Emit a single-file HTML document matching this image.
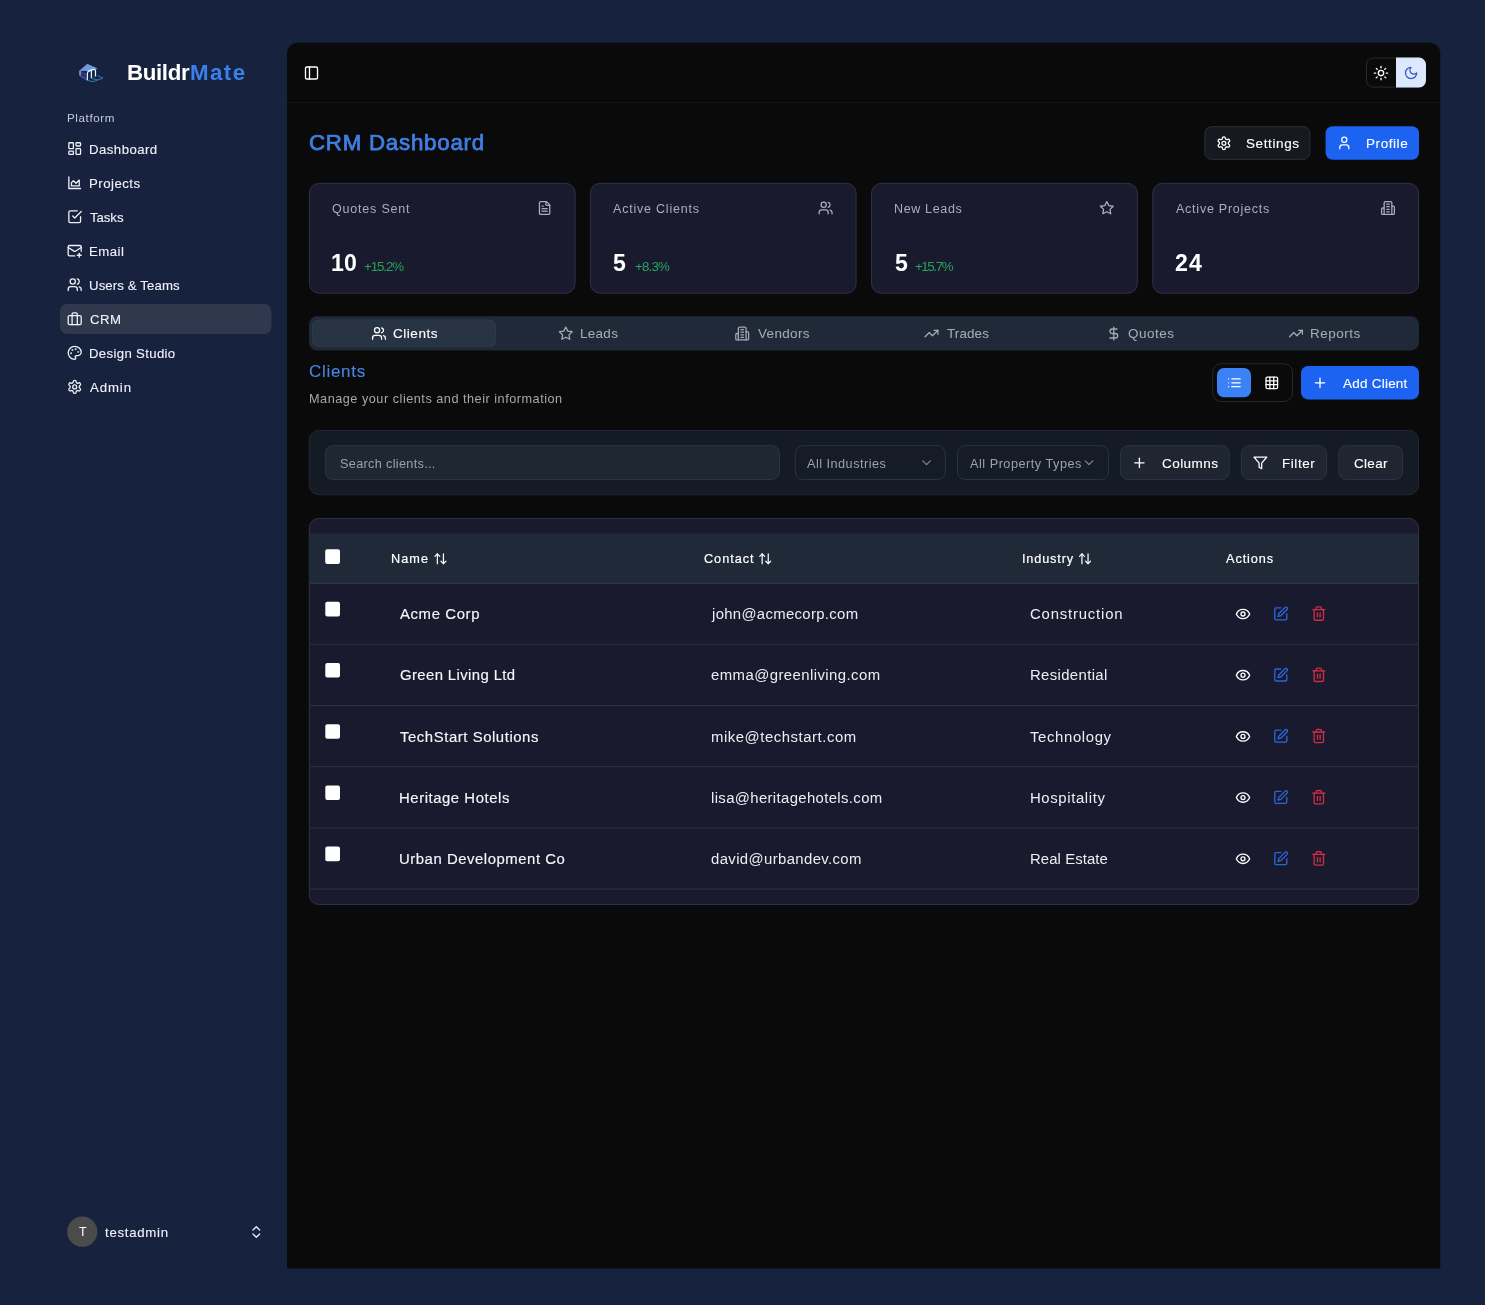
<!DOCTYPE html>
<html>
<head>
<meta charset="utf-8">
<title>CRM Dashboard</title>
<style>
*{box-sizing:border-box;margin:0;padding:0}
html,body{width:1485px;height:1305px;overflow:hidden}
body{background:#17223f;font-family:"Liberation Sans",sans-serif;color:#fff;position:relative}
.a{position:absolute}
.t{white-space:nowrap;line-height:1;will-change:transform}
.i{fill:none;stroke:currentColor;stroke-linecap:round;stroke-linejoin:round}
</style>
</head>
<body>
<svg class="a" id="bgsvg" style="left:0;top:0" width="1485" height="1305" viewBox="0 0 1485 1305">
<g>
<polygon points="80,70.300 87.400,64 97.500,68.300 90.500,72.800 87.400,71.200" fill="#6a9ddb"/>
<polygon points="80,70.300 87.400,64 89.500,65 82,71.500" fill="#7f8fe0"/>
<polygon points="80,70.500 80,75.600 87.400,80.200 87.400,73.500" fill="#243873"/>
<polygon points="87.400,73 97.500,68.500 97.500,76.500 87.400,80.200" fill="#102c4e"/>
<path d="M80 70.500V75.600" stroke="#c9d4f4" stroke-width="1.100" fill="none"/>
<path d="M80 75.800L87.400 80.300" stroke="#5552b8" stroke-width="1.200" fill="none"/>
<path d="M87.400 80.200V73.200Q87.600 71.300 89.500 70.500L91.400 69.800V78.300M91.400 69.800Q93 69 94.300 69.600L95.500 70.100V76.400" stroke="#eef4ff" stroke-width="1.150" fill="none"/>
<path d="M87.400 80.300L93 81.700L103 78L97.500 75.600M91.400 78.400L97.500 79.800" stroke="#3a82b4" stroke-width="0.900" fill="none"/>
</g>
<rect x="60" y="304" width="211.4" height="30" rx="7" fill="#30384d"/>
<svg class="i" x="66.9" y="140.8" width="15.6" height="15.6" viewBox="0 0 24 24" color="#eef1f7" stroke-width="2"><rect width="7" height="9" x="3" y="3" rx="1"/><rect width="7" height="5" x="14" y="3" rx="1"/><rect width="7" height="9" x="14" y="12" rx="1"/><rect width="7" height="5" x="3" y="16" rx="1"/></svg>
<svg class="i" x="66.9" y="174.84" width="15.6" height="15.6" viewBox="0 0 24 24" color="#eef1f7" stroke-width="2"><path d="M3 3v18h18"/><path d="M7 12v5h12V8l-5 5-4-4Z"/></svg>
<svg class="i" x="66.9" y="208.88" width="15.6" height="15.6" viewBox="0 0 24 24" color="#eef1f7" stroke-width="2"><path d="m9 11 3 3L22 4"/><path d="M21 12v7a2 2 0 0 1-2 2H5a2 2 0 0 1-2-2V5a2 2 0 0 1 2-2h11"/></svg>
<svg class="i" x="66.9" y="242.92" width="15.6" height="15.6" viewBox="0 0 24 24" color="#eef1f7" stroke-width="2"><path d="M22 13V6a2 2 0 0 0-2-2H4a2 2 0 0 0-2 2v12c0 1.1.9 2 2 2h8"/><path d="m22 7-8.970 5.700a1.940 1.940 0 0 1-2.060 0L2 7"/><path d="M19 16v6"/><path d="M16 19h6"/></svg>
<svg class="i" x="66.9" y="276.96" width="15.6" height="15.6" viewBox="0 0 24 24" color="#eef1f7" stroke-width="2"><path d="M16 21v-2a4 4 0 0 0-4-4H6a4 4 0 0 0-4 4v2"/><circle cx="9" cy="7" r="4"/><path d="M22 21v-2a4 4 0 0 0-3-3.870"/><path d="M16 3.130a4 4 0 0 1 0 7.750"/></svg>
<svg class="i" x="66.9" y="311" width="15.6" height="15.6" viewBox="0 0 24 24" color="#eef1f7" stroke-width="2"><rect width="20" height="14" x="2" y="7" rx="2" ry="2"/><path d="M16 21V5a2 2 0 0 0-2-2h-4a2 2 0 0 0-2 2v16"/></svg>
<svg class="i" x="66.9" y="345.04" width="15.6" height="15.6" viewBox="0 0 24 24" color="#eef1f7" stroke-width="2"><circle cx="13.500" cy="6.500" r=".5" fill="currentColor"/><circle cx="17.500" cy="10.500" r=".5" fill="currentColor"/><circle cx="8.500" cy="7.500" r=".5" fill="currentColor"/><circle cx="6.500" cy="12.500" r=".5" fill="currentColor"/><path d="M12 2C6.500 2 2 6.500 2 12s4.500 10 10 10c.926 0 1.648-.746 1.648-1.688 0-.437-.18-.835-.437-1.125-.29-.289-.438-.652-.438-1.125a1.640 1.640 0 0 1 1.668-1.668h1.996c3.051 0 5.555-2.503 5.555-5.554C21.965 6.012 17.461 2 12 2z"/></svg>
<svg class="i" x="66.9" y="379.08" width="15.6" height="15.6" viewBox="0 0 24 24" color="#eef1f7" stroke-width="2"><path d="M12.220 2h-.44a2 2 0 0 0-2 2v.18a2 2 0 0 1-1 1.730l-.43.250a2 2 0 0 1-2 0l-.15-.08a2 2 0 0 0-2.730.730l-.22.380a2 2 0 0 0 .73 2.730l.15.100a2 2 0 0 1 1 1.720v.510a2 2 0 0 1-1 1.740l-.15.090a2 2 0 0 0-.73 2.730l.22.380a2 2 0 0 0 2.730.730l.15-.08a2 2 0 0 1 2 0l.43.250a2 2 0 0 1 1 1.730V20a2 2 0 0 0 2 2h.44a2 2 0 0 0 2-2v-.18a2 2 0 0 1 1-1.730l.43-.250a2 2 0 0 1 2 0l.15.080a2 2 0 0 0 2.730-.730l.22-.390a2 2 0 0 0-.73-2.730l-.15-.080a2 2 0 0 1-1-1.740v-.500a2 2 0 0 1 1-1.740l.15-.090a2 2 0 0 0 .73-2.730l-.22-.380a2 2 0 0 0-2.730-.730l-.15.080a2 2 0 0 1-2 0l-.43-.250a2 2 0 0 1-1-1.730V4a2 2 0 0 0-2-2z"/><circle cx="12" cy="12" r="3"/></svg>
<circle cx="82.3" cy="1231.7" r="15.1" fill="#4b4b4b"/>
<svg class="i" x="248.3" y="1224" width="16" height="16" viewBox="0 0 24 24" color="#e8ecf4" stroke-width="2"><path d="m7 15 5 5 5-5"/><path d="m7 9 5-5 5 5"/></svg>
<path d="M297.5 42.7H1429.8A10.5 10.5 0 0 1 1440.3 53.2V1268.5H287V53.2A10.5 10.5 0 0 1 297.5 42.7Z" fill="#0a0a0a"/>
<rect x="287" y="102.2" width="1153.3" height="1" fill="#171717"/>
<svg class="i" x="303.5" y="65" width="16" height="16" viewBox="0 0 24 24" color="#fff" stroke-width="2"><rect width="18" height="18" x="3" y="3" rx="2"/><path d="M9 3v18"/></svg>
<rect x="1366.5" y="58.1" width="59" height="29" rx="6.5" fill="#0a0a0a" stroke="#2b2b2b" stroke-width="1"/>
<path d="M1396 57.6H1419A7 7 0 0 1 1426 64.6V80.6A7 7 0 0 1 1419 87.6H1396V57.6Z" fill="#dbe8fd"/>
<svg class="i" x="1373" y="65.1" width="16" height="16" viewBox="0 0 24 24" color="#fff" stroke-width="2"><circle cx="12" cy="12" r="4"/><path d="M12 2v2"/><path d="M12 20v2"/><path d="m4.930 4.930 1.410 1.410"/><path d="m17.660 17.660 1.410 1.410"/><path d="M2 12h2"/><path d="M20 12h2"/><path d="m6.340 17.660-1.410 1.410"/><path d="m19.070 4.930-1.410 1.410"/></svg>
<svg class="i" x="1403.6" y="65.5" width="15" height="15" viewBox="0 0 24 24" color="#3556bd" stroke-width="2"><path d="M12 3a6 6 0 0 0 9 9 9 9 0 1 1-9-9Z"/></svg>
<rect x="1204.9" y="126.7" width="105" height="32.6" rx="6.5" fill="#161a20" stroke="#2b3038" stroke-width="1"/>
<svg class="i" x="1216.2" y="135.5" width="15.4" height="15.4" viewBox="0 0 24 24" color="#fff" stroke-width="2"><path d="M12.220 2h-.44a2 2 0 0 0-2 2v.18a2 2 0 0 1-1 1.730l-.43.250a2 2 0 0 1-2 0l-.15-.08a2 2 0 0 0-2.730.730l-.22.380a2 2 0 0 0 .73 2.730l.15.100a2 2 0 0 1 1 1.720v.510a2 2 0 0 1-1 1.740l-.15.090a2 2 0 0 0-.73 2.730l.22.380a2 2 0 0 0 2.730.730l.15-.08a2 2 0 0 1 2 0l.43.250a2 2 0 0 1 1 1.730V20a2 2 0 0 0 2 2h.44a2 2 0 0 0 2-2v-.18a2 2 0 0 1 1-1.730l.43-.250a2 2 0 0 1 2 0l.15.080a2 2 0 0 0 2.730-.730l.22-.390a2 2 0 0 0-.73-2.730l-.15-.080a2 2 0 0 1-1-1.740v-.500a2 2 0 0 1 1-1.740l.15-.090a2 2 0 0 0 .73-2.730l-.22-.380a2 2 0 0 0-2.730-.730l-.15.080a2 2 0 0 1-2 0l-.43-.250a2 2 0 0 1-1-1.730V4a2 2 0 0 0-2-2z"/><circle cx="12" cy="12" r="3"/></svg>
<rect x="1325.6" y="126.2" width="93.4" height="33.6" rx="7" fill="#1d63f1"/>
<svg class="i" x="1336.6" y="135.3" width="15.4" height="15.4" viewBox="0 0 24 24" color="#fff" stroke-width="2"><path d="M19 21v-2a4 4 0 0 0-4-4H9a4 4 0 0 0-4 4v2"/><circle cx="12" cy="7" r="4"/></svg>
<rect x="309.4" y="183.4" width="265.7" height="109.8" rx="9.5" fill="#1a1a2e" stroke="#303248" stroke-width="1"/>
<svg class="i" x="536.9" y="200.3" width="15.4" height="15.4" viewBox="0 0 24 24" color="#a9aebb" stroke-width="2"><path d="M15 2H6a2 2 0 0 0-2 2v16a2 2 0 0 0 2 2h12a2 2 0 0 0 2-2V7Z"/><path d="M14 2v4a2 2 0 0 0 2 2h4"/><path d="M10 9H8"/><path d="M16 13H8"/><path d="M16 17H8"/></svg>
<rect x="590.4" y="183.4" width="265.7" height="109.8" rx="9.5" fill="#1a1a2e" stroke="#303248" stroke-width="1"/>
<svg class="i" x="817.9" y="200.3" width="15.4" height="15.4" viewBox="0 0 24 24" color="#a9aebb" stroke-width="2"><path d="M16 21v-2a4 4 0 0 0-4-4H6a4 4 0 0 0-4 4v2"/><circle cx="9" cy="7" r="4"/><path d="M22 21v-2a4 4 0 0 0-3-3.870"/><path d="M16 3.130a4 4 0 0 1 0 7.750"/></svg>
<rect x="871.6" y="183.4" width="265.7" height="109.8" rx="9.5" fill="#1a1a2e" stroke="#303248" stroke-width="1"/>
<svg class="i" x="1099.1" y="200.3" width="15.4" height="15.4" viewBox="0 0 24 24" color="#a9aebb" stroke-width="2"><polygon points="12 2 15.090 8.260 22 9.270 17 14.140 18.180 21.020 12 17.770 5.820 21.020 7 14.140 2 9.270 8.910 8.260 12 2"/></svg>
<rect x="1152.8" y="183.4" width="265.7" height="109.8" rx="9.5" fill="#1a1a2e" stroke="#303248" stroke-width="1"/>
<svg class="i" x="1380.3" y="200.3" width="15.4" height="15.4" viewBox="0 0 24 24" color="#a9aebb" stroke-width="2"><path d="M6 22V4a2 2 0 0 1 2-2h8a2 2 0 0 1 2 2v18Z"/><path d="M6 12H4a2 2 0 0 0-2 2v6a2 2 0 0 0 2 2h2"/><path d="M18 9h2a2 2 0 0 1 2 2v9a2 2 0 0 1-2 2h-2"/><path d="M10 6h4"/><path d="M10 10h4"/><path d="M10 14h4"/><path d="M10 18h4"/></svg>
<rect x="309" y="316.3" width="1110" height="34.1" rx="8" fill="#1f2937"/>
<rect x="312.5" y="320" width="183" height="26.7" rx="5.5" fill="#283344" stroke="#2d3849" stroke-width="1"/>
<svg class="i" x="371.3" y="325.8" width="15.4" height="15.4" viewBox="0 0 24 24" color="#fff" stroke-width="2"><path d="M16 21v-2a4 4 0 0 0-4-4H6a4 4 0 0 0-4 4v2"/><circle cx="9" cy="7" r="4"/><path d="M22 21v-2a4 4 0 0 0-3-3.870"/><path d="M16 3.130a4 4 0 0 1 0 7.750"/></svg>
<svg class="i" x="558.1" y="325.8" width="15.4" height="15.4" viewBox="0 0 24 24" color="#a4aab7" stroke-width="2"><polygon points="12 2 15.090 8.260 22 9.270 17 14.140 18.180 21.020 12 17.770 5.820 21.020 7 14.140 2 9.270 8.910 8.260 12 2"/></svg>
<svg class="i" x="734.5" y="325.8" width="15.4" height="15.4" viewBox="0 0 24 24" color="#a4aab7" stroke-width="2"><path d="M6 22V4a2 2 0 0 1 2-2h8a2 2 0 0 1 2 2v18Z"/><path d="M6 12H4a2 2 0 0 0-2 2v6a2 2 0 0 0 2 2h2"/><path d="M18 9h2a2 2 0 0 1 2 2v9a2 2 0 0 1-2 2h-2"/><path d="M10 6h4"/><path d="M10 10h4"/><path d="M10 14h4"/><path d="M10 18h4"/></svg>
<svg class="i" x="923.8" y="325.8" width="15.4" height="15.4" viewBox="0 0 24 24" color="#a4aab7" stroke-width="2"><polyline points="22 7 13.500 15.500 8.500 10.500 2 17"/><polyline points="16 7 22 7 22 13"/></svg>
<svg class="i" x="1106.1" y="325.8" width="15.4" height="15.4" viewBox="0 0 24 24" color="#a4aab7" stroke-width="2"><line x1="12" x2="12" y1="2" y2="22"/><path d="M17 5H9.500a3.500 3.500 0 0 0 0 7h5a3.500 3.500 0 0 1 0 7H6"/></svg>
<svg class="i" x="1288.3" y="325.8" width="15.4" height="15.4" viewBox="0 0 24 24" color="#a4aab7" stroke-width="2"><polyline points="22 7 13.500 15.500 8.500 10.500 2 17"/><polyline points="16 7 22 7 22 13"/></svg>
<rect x="1212.7" y="363.7" width="79.8" height="37.8" rx="8.5" fill="none" stroke="#272727" stroke-width="1"/>
<rect x="1217" y="368" width="34" height="29.2" rx="7" fill="#3b82f6"/>
<svg class="i" x="1226.7" y="375.1" width="15.4" height="15.4" viewBox="0 0 24 24" color="#fff" stroke-width="2"><line x1="8" x2="21" y1="6" y2="6"/><line x1="8" x2="21" y1="12" y2="12"/><line x1="8" x2="21" y1="18" y2="18"/><line x1="3" x2="3.010" y1="6" y2="6"/><line x1="3" x2="3.010" y1="12" y2="12"/><line x1="3" x2="3.010" y1="18" y2="18"/></svg>
<svg class="i" x="1264.1" y="375.1" width="15.4" height="15.4" viewBox="0 0 24 24" color="#fff" stroke-width="2"><rect width="18" height="18" x="3" y="3" rx="2"/><path d="M3 9h18"/><path d="M3 15h18"/><path d="M9 3v18"/><path d="M15 3v18"/></svg>
<rect x="1301" y="366" width="118" height="33.4" rx="7" fill="#1d63f1"/>
<svg class="i" x="1312" y="374.8" width="16" height="16" viewBox="0 0 24 24" color="#fff" stroke-width="2"><path d="M5 12h14"/><path d="M12 5v14"/></svg>
<rect x="309.3" y="430.5" width="1109.2" height="64.2" rx="9.5" fill="#151b25" stroke="#1f2836" stroke-width="1"/>
<rect x="325.3" y="445.7" width="454.2" height="33.8" rx="7.5" fill="#1f2733" stroke="#2b3443" stroke-width="1"/>
<rect x="795.3" y="445.7" width="150" height="33.8" rx="7.5" fill="#161c27" stroke="#2a3342" stroke-width="1"/>
<svg class="i" x="919" y="455.3" width="15" height="15" viewBox="0 0 24 24" color="#7f8695" stroke-width="2"><path d="m6 9 6 6 6-6"/></svg>
<rect x="957.5" y="445.7" width="151" height="33.8" rx="7.5" fill="#161c27" stroke="#2a3342" stroke-width="1"/>
<svg class="i" x="1081.5" y="455.3" width="15" height="15" viewBox="0 0 24 24" color="#7f8695" stroke-width="2"><path d="m6 9 6 6 6-6"/></svg>
<rect x="1120.5" y="445.7" width="108.8" height="33.8" rx="7.5" fill="#1f2631" stroke="#2b3340" stroke-width="1"/>
<svg class="i" x="1131.4" y="454.8" width="16" height="16" viewBox="0 0 24 24" color="#fff" stroke-width="2"><path d="M5 12h14"/><path d="M12 5v14"/></svg>
<rect x="1241.5" y="445.7" width="85" height="33.8" rx="7.5" fill="#1f2631" stroke="#2b3340" stroke-width="1"/>
<svg class="i" x="1252.7" y="455.1" width="15.4" height="15.4" viewBox="0 0 24 24" color="#fff" stroke-width="2"><polygon points="22 3 2 3 10 12.460 10 19 14 21 14 12.460 22 3"/></svg>
<rect x="1338.7" y="445.7" width="63.8" height="33.8" rx="7.5" fill="#1f2631" stroke="#2b3340" stroke-width="1"/>
<rect x="309.3" y="518.4" width="1109.2" height="386.1" rx="9.5" fill="#1a1a2e" stroke="#303248" stroke-width="1"/>
<rect x="309.8" y="533.6" width="1108.2" height="49.8" fill="#1f2937"/>
<rect x="309.8" y="582.8" width="1108.2" height="1" fill="#313a4b"/>
<rect x="325.2" y="549.2" width="14.8" height="14.8" rx="2" fill="#fff"/>
<svg class="i" x="433.1" y="551.5" width="14.6" height="14.6" viewBox="0 0 24 24" color="#fff" stroke-width="2"><path d="m3 8 4-4 4 4"/><path d="M7 4v16"/><path d="m21 16-4 4-4-4"/><path d="M17 20V4"/></svg>
<svg class="i" x="757.9" y="551.5" width="14.6" height="14.6" viewBox="0 0 24 24" color="#fff" stroke-width="2"><path d="m3 8 4-4 4 4"/><path d="M7 4v16"/><path d="m21 16-4 4-4-4"/><path d="M17 20V4"/></svg>
<svg class="i" x="1077.7" y="551.5" width="14.6" height="14.6" viewBox="0 0 24 24" color="#fff" stroke-width="2"><path d="m3 8 4-4 4 4"/><path d="M7 4v16"/><path d="m21 16-4 4-4-4"/><path d="M17 20V4"/></svg>
<rect x="309.8" y="643.8" width="1108.2" height="1" fill="#2d3146"/>
<rect x="325.3" y="601.8" width="14.7" height="14.6" rx="2" fill="#fff"/>
<svg class="i" x="1235" y="606" width="16" height="16" viewBox="0 0 24 24" color="#fff" stroke-width="2"><path d="M2 12s3-7 10-7 10 7 10 7-3 7-10 7-10-7-10-7Z"/><circle cx="12" cy="12" r="3"/></svg>
<svg class="i" x="1272.8" y="605.8" width="16" height="16" viewBox="0 0 24 24" color="#2a67d8" stroke-width="2"><path d="M12 3H5a2 2 0 0 0-2 2v14a2 2 0 0 0 2 2h14a2 2 0 0 0 2-2v-7"/><path d="M18.375 2.625a2.121 2.121 0 1 1 3 3L12 15l-4 1 1-4Z"/></svg>
<svg class="i" x="1310.8" y="605.6" width="16" height="16" viewBox="0 0 24 24" color="#cf2e45" stroke-width="2"><path d="M3 6h18"/><path d="M19 6v14c0 1-1 2-2 2H7c-1 0-2-1-2-2V6"/><path d="M8 6V4c0-1 1-2 2-2h4c1 0 2 1 2 2v2"/><line x1="10" x2="10" y1="11" y2="17"/><line x1="14" x2="14" y1="11" y2="17"/></svg>
<rect x="309.8" y="705" width="1108.2" height="1" fill="#2d3146"/>
<rect x="325.3" y="663" width="14.7" height="14.6" rx="2" fill="#fff"/>
<svg class="i" x="1235" y="667.2" width="16" height="16" viewBox="0 0 24 24" color="#fff" stroke-width="2"><path d="M2 12s3-7 10-7 10 7 10 7-3 7-10 7-10-7-10-7Z"/><circle cx="12" cy="12" r="3"/></svg>
<svg class="i" x="1272.8" y="667" width="16" height="16" viewBox="0 0 24 24" color="#2a67d8" stroke-width="2"><path d="M12 3H5a2 2 0 0 0-2 2v14a2 2 0 0 0 2 2h14a2 2 0 0 0 2-2v-7"/><path d="M18.375 2.625a2.121 2.121 0 1 1 3 3L12 15l-4 1 1-4Z"/></svg>
<svg class="i" x="1310.8" y="666.8" width="16" height="16" viewBox="0 0 24 24" color="#cf2e45" stroke-width="2"><path d="M3 6h18"/><path d="M19 6v14c0 1-1 2-2 2H7c-1 0-2-1-2-2V6"/><path d="M8 6V4c0-1 1-2 2-2h4c1 0 2 1 2 2v2"/><line x1="10" x2="10" y1="11" y2="17"/><line x1="14" x2="14" y1="11" y2="17"/></svg>
<rect x="309.8" y="766.2" width="1108.2" height="1" fill="#2d3146"/>
<rect x="325.3" y="724.2" width="14.7" height="14.6" rx="2" fill="#fff"/>
<svg class="i" x="1235" y="728.4" width="16" height="16" viewBox="0 0 24 24" color="#fff" stroke-width="2"><path d="M2 12s3-7 10-7 10 7 10 7-3 7-10 7-10-7-10-7Z"/><circle cx="12" cy="12" r="3"/></svg>
<svg class="i" x="1272.8" y="728.2" width="16" height="16" viewBox="0 0 24 24" color="#2a67d8" stroke-width="2"><path d="M12 3H5a2 2 0 0 0-2 2v14a2 2 0 0 0 2 2h14a2 2 0 0 0 2-2v-7"/><path d="M18.375 2.625a2.121 2.121 0 1 1 3 3L12 15l-4 1 1-4Z"/></svg>
<svg class="i" x="1310.8" y="728" width="16" height="16" viewBox="0 0 24 24" color="#cf2e45" stroke-width="2"><path d="M3 6h18"/><path d="M19 6v14c0 1-1 2-2 2H7c-1 0-2-1-2-2V6"/><path d="M8 6V4c0-1 1-2 2-2h4c1 0 2 1 2 2v2"/><line x1="10" x2="10" y1="11" y2="17"/><line x1="14" x2="14" y1="11" y2="17"/></svg>
<rect x="309.8" y="827.4" width="1108.2" height="1" fill="#2d3146"/>
<rect x="325.3" y="785.4" width="14.7" height="14.6" rx="2" fill="#fff"/>
<svg class="i" x="1235" y="789.6" width="16" height="16" viewBox="0 0 24 24" color="#fff" stroke-width="2"><path d="M2 12s3-7 10-7 10 7 10 7-3 7-10 7-10-7-10-7Z"/><circle cx="12" cy="12" r="3"/></svg>
<svg class="i" x="1272.8" y="789.4" width="16" height="16" viewBox="0 0 24 24" color="#2a67d8" stroke-width="2"><path d="M12 3H5a2 2 0 0 0-2 2v14a2 2 0 0 0 2 2h14a2 2 0 0 0 2-2v-7"/><path d="M18.375 2.625a2.121 2.121 0 1 1 3 3L12 15l-4 1 1-4Z"/></svg>
<svg class="i" x="1310.8" y="789.2" width="16" height="16" viewBox="0 0 24 24" color="#cf2e45" stroke-width="2"><path d="M3 6h18"/><path d="M19 6v14c0 1-1 2-2 2H7c-1 0-2-1-2-2V6"/><path d="M8 6V4c0-1 1-2 2-2h4c1 0 2 1 2 2v2"/><line x1="10" x2="10" y1="11" y2="17"/><line x1="14" x2="14" y1="11" y2="17"/></svg>
<rect x="309.8" y="888.6" width="1108.2" height="1" fill="#2d3146"/>
<rect x="325.3" y="846.6" width="14.7" height="14.6" rx="2" fill="#fff"/>
<svg class="i" x="1235" y="850.8" width="16" height="16" viewBox="0 0 24 24" color="#fff" stroke-width="2"><path d="M2 12s3-7 10-7 10 7 10 7-3 7-10 7-10-7-10-7Z"/><circle cx="12" cy="12" r="3"/></svg>
<svg class="i" x="1272.8" y="850.6" width="16" height="16" viewBox="0 0 24 24" color="#2a67d8" stroke-width="2"><path d="M12 3H5a2 2 0 0 0-2 2v14a2 2 0 0 0 2 2h14a2 2 0 0 0 2-2v-7"/><path d="M18.375 2.625a2.121 2.121 0 1 1 3 3L12 15l-4 1 1-4Z"/></svg>
<svg class="i" x="1310.8" y="850.4" width="16" height="16" viewBox="0 0 24 24" color="#cf2e45" stroke-width="2"><path d="M3 6h18"/><path d="M19 6v14c0 1-1 2-2 2H7c-1 0-2-1-2-2V6"/><path d="M8 6V4c0-1 1-2 2-2h4c1 0 2 1 2 2v2"/><line x1="10" x2="10" y1="11" y2="17"/><line x1="14" x2="14" y1="11" y2="17"/></svg>
</svg>
<div class="a t" id="brandA" style="left:127.37px;top:62.12px;font-size:22.3px;color:#fff;letter-spacing:-0.37px;font-weight:700;">Buildr</div>
<div class="a t" id="brandB" style="left:190.39px;top:62.12px;font-size:22.3px;color:#3a7fea;letter-spacing:1.43px;font-weight:700;">Mate</div>
<div class="a t" id="plat" style="left:66.71px;top:111.58px;font-size:11.6px;color:#c6cbd8;letter-spacing:0.62px;">Platform</div>
<div class="a t" id="nav0" style="left:89.17px;top:142.83px;font-size:13.2px;color:#f0f2f8;letter-spacing:0.46px;-webkit-text-stroke:0.12px #f0f2f8;">Dashboard</div>
<div class="a t" id="nav1" style="left:89.17px;top:176.87px;font-size:13.2px;color:#f0f2f8;letter-spacing:0.49px;-webkit-text-stroke:0.12px #f0f2f8;">Projects</div>
<div class="a t" id="nav2" style="left:89.87px;top:210.91px;font-size:13.2px;color:#f0f2f8;letter-spacing:-0.05px;-webkit-text-stroke:0.12px #f0f2f8;">Tasks</div>
<div class="a t" id="nav3" style="left:89.17px;top:244.95px;font-size:13.2px;color:#f0f2f8;letter-spacing:0.46px;-webkit-text-stroke:0.12px #f0f2f8;">Email</div>
<div class="a t" id="nav4" style="left:88.96px;top:278.99px;font-size:13.2px;color:#f0f2f8;letter-spacing:0.12px;-webkit-text-stroke:0.12px #f0f2f8;">Users &amp; Teams</div>
<div class="a t" id="nav5" style="left:90.08px;top:313.03px;font-size:13.2px;color:#f0f2f8;letter-spacing:0.44px;-webkit-text-stroke:0.12px #f0f2f8;">CRM</div>
<div class="a t" id="nav6" style="left:89.17px;top:347.07px;font-size:13.2px;color:#f0f2f8;letter-spacing:0.34px;-webkit-text-stroke:0.12px #f0f2f8;">Design Studio</div>
<div class="a t" id="nav7" style="left:90.35px;top:381.11px;font-size:13.2px;color:#f0f2f8;letter-spacing:0.91px;-webkit-text-stroke:0.12px #f0f2f8;">Admin</div>
<div class="a t" id="avT" style="left:78.9px;top:1225.7px;font-size:12.4px;color:#fff;">T</div>
<div class="a t" id="uname" style="left:105.45px;top:1225.53px;font-size:13.2px;color:#f0f2f8;letter-spacing:0.74px;-webkit-text-stroke:0.12px #f0f2f8;">testadmin</div>
<div class="a t" id="title" style="left:309.23px;top:132.12px;font-size:22.3px;color:#3f7fe3;letter-spacing:0.76px;-webkit-text-stroke:0.75px #3f7fe3;">CRM Dashboard</div>
<div class="a t" id="bset" style="left:1246.03px;top:136.57px;font-size:13.5px;color:#fff;letter-spacing:0.61px;-webkit-text-stroke:0.12px #fff;">Settings</div>
<div class="a t" id="bprof" style="left:1366.28px;top:136.57px;font-size:13.5px;color:#fff;letter-spacing:0.57px;-webkit-text-stroke:0.12px #fff;">Profile</div>
<div class="a t" id="ct0" style="left:332.14px;top:203.32px;font-size:12.5px;color:#a9adbd;letter-spacing:0.81px;">Quotes Sent</div>
<div class="a t" id="cn0" style="left:331.04px;top:252.45px;font-size:23.1px;color:#fff;letter-spacing:0.08px;font-weight:700;">10</div>
<div class="a t" id="cp0" style="left:364.16px;top:259.74px;font-size:13.3px;color:#28a35c;letter-spacing:-1.09px;">+15.2%</div>
<div class="a t" id="ct1" style="left:613px;top:203.32px;font-size:12.5px;color:#a9adbd;letter-spacing:0.79px;">Active Clients</div>
<div class="a t" id="cn1" style="left:613.28px;top:252.45px;font-size:23.1px;color:#fff;font-weight:700;">5</div>
<div class="a t" id="cp1" style="left:634.69px;top:259.74px;font-size:13.3px;color:#28a35c;letter-spacing:-0.8px;">+8.3%</div>
<div class="a t" id="ct2" style="left:893.56px;top:203.32px;font-size:12.5px;color:#a9adbd;letter-spacing:0.66px;">New Leads</div>
<div class="a t" id="cn2" style="left:895.09px;top:252.45px;font-size:23.1px;color:#fff;font-weight:700;">5</div>
<div class="a t" id="cp2" style="left:915.08px;top:259.74px;font-size:13.3px;color:#28a35c;letter-spacing:-1.4px;">+15.7%</div>
<div class="a t" id="ct3" style="left:1175.79px;top:203.32px;font-size:12.5px;color:#a9adbd;letter-spacing:0.76px;">Active Projects</div>
<div class="a t" id="cn3" style="left:1175.44px;top:252.45px;font-size:23.1px;color:#fff;letter-spacing:1.07px;font-weight:700;">24</div>
<div class="a t" id="tab0" style="left:393.1px;top:326.97px;font-size:13.5px;color:#fff;letter-spacing:0.53px;-webkit-text-stroke:0.12px #fff;">Clients</div>
<div class="a t" id="tab1" style="left:580.44px;top:326.97px;font-size:13.5px;color:#a4aab7;letter-spacing:0.28px;-webkit-text-stroke:0.05px #a4aab7;">Leads</div>
<div class="a t" id="tab2" style="left:757.77px;top:326.97px;font-size:13.5px;color:#a4aab7;letter-spacing:0.32px;-webkit-text-stroke:0.05px #a4aab7;">Vendors</div>
<div class="a t" id="tab3" style="left:946.6px;top:326.97px;font-size:13.5px;color:#a4aab7;letter-spacing:0.09px;-webkit-text-stroke:0.05px #a4aab7;">Trades</div>
<div class="a t" id="tab4" style="left:1128.09px;top:326.97px;font-size:13.5px;color:#a4aab7;letter-spacing:0.49px;-webkit-text-stroke:0.05px #a4aab7;">Quotes</div>
<div class="a t" id="tab5" style="left:1310.06px;top:326.97px;font-size:13.5px;color:#a4aab7;letter-spacing:0.51px;-webkit-text-stroke:0.05px #a4aab7;">Reports</div>
<div class="a t" id="h2" style="left:309.23px;top:363.01px;font-size:17px;color:#4a84e6;letter-spacing:0.7px;-webkit-text-stroke:0.1px #4a84e6;">Clients</div>
<div class="a t" id="sub" style="left:308.5px;top:393.05px;font-size:12.7px;color:#a6a8ae;letter-spacing:0.51px;">Manage your clients and their information</div>
<div class="a t" id="badd" style="left:1343.04px;top:377.27px;font-size:13.5px;color:#fff;letter-spacing:0.23px;-webkit-text-stroke:0.12px #fff;">Add Client</div>
<div class="a t" id="fsearch" style="left:340.01px;top:457.75px;font-size:12.7px;color:#9ba1ae;letter-spacing:0.32px;">Search clients...</div>
<div class="a t" id="fsel1" style="left:807.09px;top:457.75px;font-size:12.7px;color:#9ba1ae;letter-spacing:0.48px;">All Industries</div>
<div class="a t" id="fsel2" style="left:969.66px;top:457.75px;font-size:12.7px;color:#9ba1ae;letter-spacing:0.51px;">All Property Types</div>
<div class="a t" id="fcol" style="left:1161.71px;top:457.07px;font-size:13.5px;color:#fff;letter-spacing:0.45px;-webkit-text-stroke:0.12px #fff;">Columns</div>
<div class="a t" id="ffil" style="left:1281.94px;top:457.07px;font-size:13.5px;color:#fff;letter-spacing:0.56px;-webkit-text-stroke:0.12px #fff;">Filter</div>
<div class="a t" id="fclr" style="left:1353.91px;top:457.07px;font-size:13.5px;color:#fff;letter-spacing:0.3px;-webkit-text-stroke:0.12px #fff;">Clear</div>
<div class="a t" id="th0" style="left:390.96px;top:553.45px;font-size:12.7px;color:#fff;letter-spacing:1.05px;-webkit-text-stroke:0.2px #fff;">Name</div>
<div class="a t" id="th1" style="left:703.77px;top:553.45px;font-size:12.7px;color:#fff;letter-spacing:0.96px;-webkit-text-stroke:0.2px #fff;">Contact</div>
<div class="a t" id="th2" style="left:1021.65px;top:553.45px;font-size:12.7px;color:#fff;letter-spacing:0.85px;-webkit-text-stroke:0.2px #fff;">Industry</div>
<div class="a t" id="th3" style="left:1226.42px;top:553.45px;font-size:12.7px;color:#fff;letter-spacing:0.93px;-webkit-text-stroke:0.2px #fff;">Actions</div>
<div class="a t" id="ra0" style="left:400.18px;top:606.59px;font-size:14.9px;color:#f5f6fa;letter-spacing:0.62px;-webkit-text-stroke:0.15px #f5f6fa;">Acme Corp</div>
<div class="a t" id="rb0" style="left:712.22px;top:606.59px;font-size:14.9px;color:#eceef3;letter-spacing:0.32px;">john@acmecorp.com</div>
<div class="a t" id="rc0" style="left:1030.48px;top:606.59px;font-size:14.9px;color:#eceef3;letter-spacing:0.81px;">Construction</div>
<div class="a t" id="ra1" style="left:399.74px;top:667.79px;font-size:14.9px;color:#f5f6fa;letter-spacing:0.39px;-webkit-text-stroke:0.15px #f5f6fa;">Green Living Ltd</div>
<div class="a t" id="rb1" style="left:710.89px;top:667.79px;font-size:14.9px;color:#eceef3;letter-spacing:0.44px;">emma@greenliving.com</div>
<div class="a t" id="rc1" style="left:1029.8px;top:667.79px;font-size:14.9px;color:#eceef3;letter-spacing:0.36px;">Residential</div>
<div class="a t" id="ra2" style="left:400.22px;top:729.99px;font-size:14.9px;color:#f5f6fa;letter-spacing:0.56px;-webkit-text-stroke:0.15px #f5f6fa;">TechStart Solutions</div>
<div class="a t" id="rb2" style="left:710.6px;top:729.99px;font-size:14.9px;color:#eceef3;letter-spacing:0.54px;">mike@techstart.com</div>
<div class="a t" id="rc2" style="left:1030.16px;top:729.99px;font-size:14.9px;color:#eceef3;letter-spacing:0.63px;">Technology</div>
<div class="a t" id="ra3" style="left:399.1px;top:791.19px;font-size:14.9px;color:#f5f6fa;letter-spacing:0.55px;-webkit-text-stroke:0.15px #f5f6fa;">Heritage Hotels</div>
<div class="a t" id="rb3" style="left:710.72px;top:791.19px;font-size:14.9px;color:#eceef3;letter-spacing:0.36px;">lisa@heritagehotels.com</div>
<div class="a t" id="rc3" style="left:1030.02px;top:791.19px;font-size:14.9px;color:#eceef3;letter-spacing:0.62px;">Hospitality</div>
<div class="a t" id="ra4" style="left:399.45px;top:852.39px;font-size:14.9px;color:#f5f6fa;letter-spacing:0.54px;-webkit-text-stroke:0.15px #f5f6fa;">Urban Development Co</div>
<div class="a t" id="rb4" style="left:710.9px;top:852.39px;font-size:14.9px;color:#eceef3;letter-spacing:0.38px;">david@urbandev.com</div>
<div class="a t" id="rc4" style="left:1029.79px;top:852.39px;font-size:14.9px;color:#eceef3;letter-spacing:0.09px;">Real Estate</div>
</body>
</html>
